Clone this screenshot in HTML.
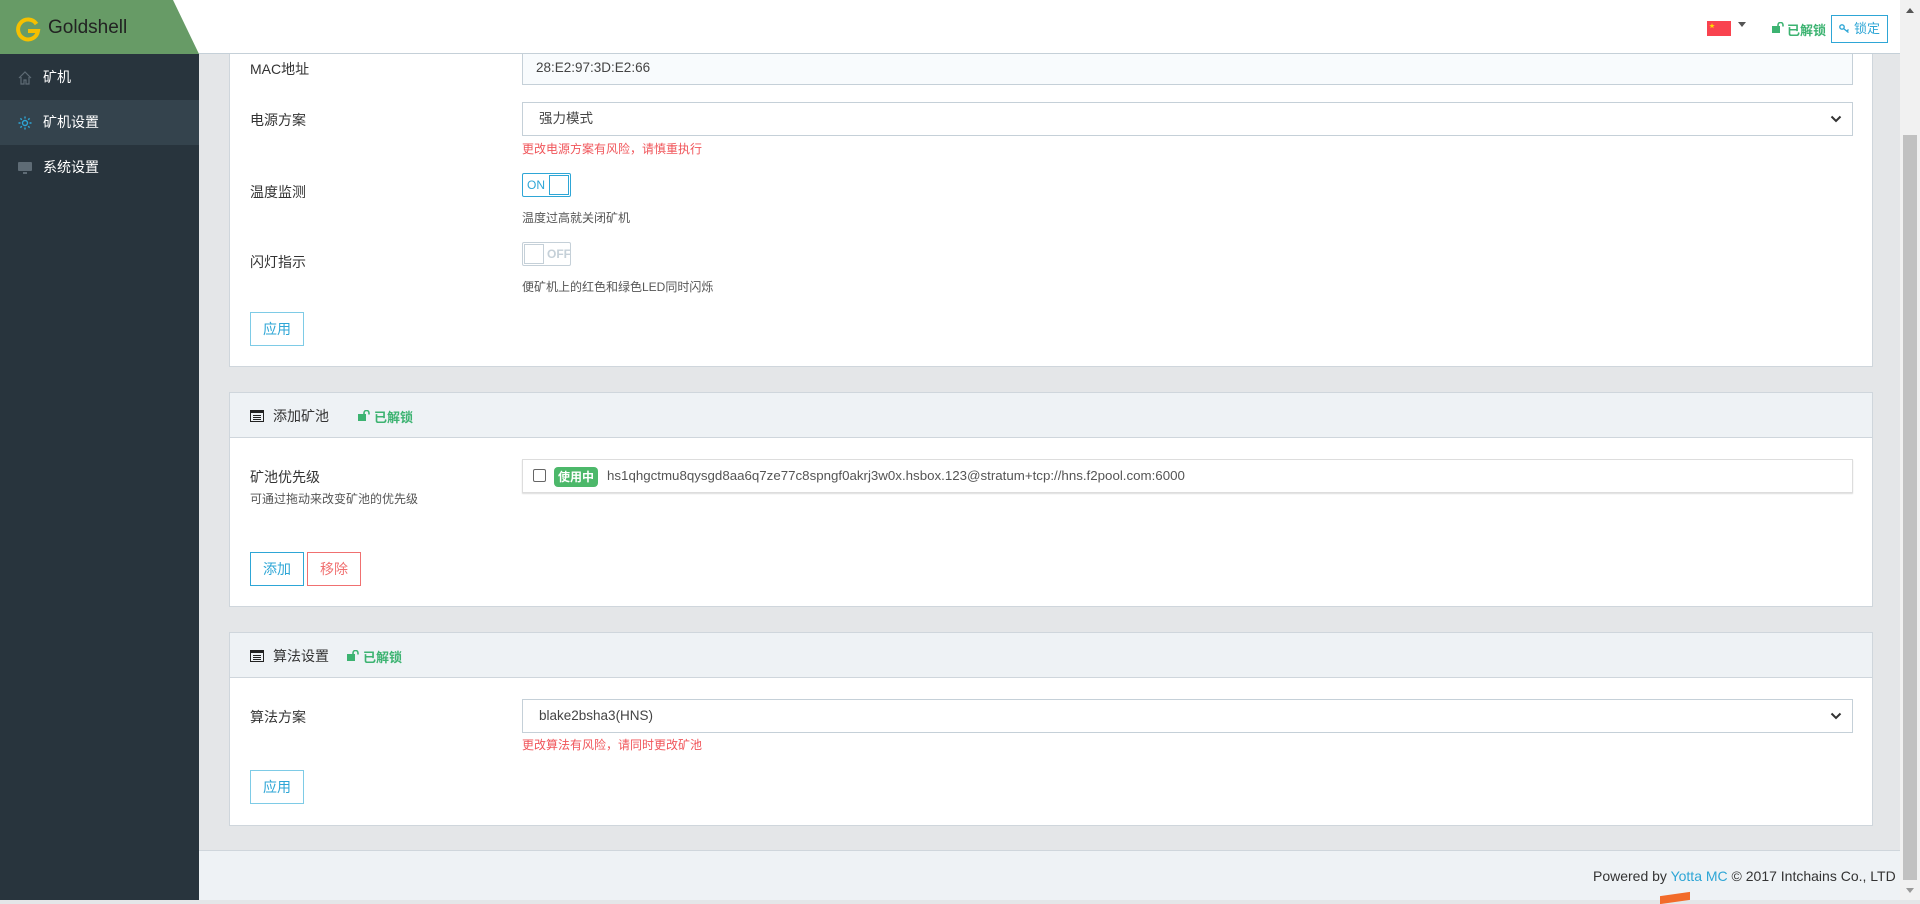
<!DOCTYPE html>
<html><head><meta charset="utf-8"><style>
*{box-sizing:border-box;margin:0;padding:0}
body{width:1920px;height:900px;overflow:hidden;background:#e4e6e8;font-family:"Liberation Sans","Noto Sans CJK SC",sans-serif;font-size:14px;color:#333;position:relative}
.abs{position:absolute}
#hdr{left:0;top:0;width:1900px;height:54px;background:#fff;border-bottom:1px solid #c5d0d8}
#logo{left:0;top:0;width:200px;height:54px;background:#679b66;clip-path:polygon(0 0,173px 0,199px 54px,0 54px)}
#side{left:0;top:54px;width:199px;height:846px;background:#28343d}
.mi{position:absolute;left:0;width:199px;height:45px;color:#fff;font-size:14px;line-height:45px;padding-left:43px}
.mi svg{position:absolute;left:17px;top:15px}
#sb{left:1900px;top:0;width:20px;height:900px;background:#f1f1f1}
.card{position:absolute;left:229px;width:1644px;background:#fff;border:1px solid #cfd6dc}
.ch{height:45px;background:#eef2f5;border-bottom:1px solid #cfd6dc;position:relative}
.lab{position:absolute;left:250px;font-size:14px;color:#333}
.inp{position:absolute;left:522px;width:1331px;height:34px;border:1px solid #c5d0d8;background:#fff;font-size:13.5px;line-height:32px;padding-left:13px;color:#444}
.red{position:absolute;left:522px;font-size:12px;color:#f0555a}
.hint{position:absolute;left:522px;font-size:12px;color:#555}
.btn{position:absolute;width:54px;height:34px;border:1px solid #2ea6d6;color:#2ea6d6;font-size:14px;line-height:32px;text-align:center;background:#fff}
.green{color:#3cb371;font-size:13px;font-weight:bold}
.chev{position:absolute;right:10px;top:12px}
</style></head><body>
<div id="side" class="abs">
 <div class="mi" style="top:1px"><svg width="16" height="16" viewBox="0 0 16 16" fill="none" stroke="#5e6b75" stroke-width="1.2"><path d="M2 8L8 2l6 6M4 7v7h3v-4h2v4h3V7"/></svg>矿机</div>
 <div class="mi" style="top:46px;background:#34434d"><svg width="16" height="16" viewBox="0 0 16 16" fill="none" stroke="#2ea6d6" stroke-width="1.4"><circle cx="8" cy="8" r="2.5"/><path d="M8 1.5v2M8 12.5v2M1.5 8h2M12.5 8h2M3.4 3.4l1.4 1.4M11.2 11.2l1.4 1.4M3.4 12.6l1.4-1.4M11.2 4.8l1.4-1.4"/></svg>矿机设置</div>
 <div class="mi" style="top:91px"><svg width="16" height="16" viewBox="0 0 16 16" fill="#5e6b75"><rect x="1" y="2" width="14" height="9" rx="1"/><rect x="6" y="12" width="4" height="2"/></svg>系统设置</div>
</div>
<!-- card1 -->
<div class="card" style="top:20px;height:347px"></div>
<div class="lab" style="top:59px">MAC地址</div>
<div class="inp" style="top:51px;background:#f8fbfd">28:E2:97:3D:E2:66</div>
<div class="lab" style="top:110px">电源方案</div>
<div class="inp" style="top:102px;padding-left:16px">强力模式<svg class="chev" width="12" height="8" viewBox="0 0 12 8"><path d="M1.5 1.5L6 6l4.5-4.5" fill="none" stroke="#333" stroke-width="2"/></svg></div>
<div class="red" style="top:140px">更改电源方案有风险，请慎重执行</div>
<div class="lab" style="top:182px">温度监测</div>
<div class="abs" style="left:522px;top:173px;width:49px;height:24px;border:1px solid #2ea6d6;border-radius:2px;font-size:12px;color:#2ea6d6;line-height:22px;padding-left:4px">ON<div class="abs" style="left:26px;top:1px;width:20px;height:20px;border:1px solid #2ea6d6"></div></div>
<div class="hint" style="top:209px">温度过高就关闭矿机</div>
<div class="lab" style="top:252px">闪灯指示</div>
<div class="abs" style="left:522px;top:242px;width:49px;height:24px;border:1px solid #c5d0d8;border-radius:2px;font-size:12px;color:#c5d0d8;line-height:22px;padding-left:24px;font-weight:bold">OFF<div class="abs" style="left:1px;top:1px;width:20px;height:20px;border:1px solid #c5d0d8"></div></div>
<div class="hint" style="top:278px">便矿机上的红色和绿色LED同时闪烁</div>
<div class="btn" style="left:250px;top:312px;border-color:#7ecbe6">应用</div>
<!-- card2 -->
<div class="card" style="top:392px;height:215px"><div class="ch">
 <svg class="abs" style="left:20px;top:17px" width="14" height="12" viewBox="0 0 14 12"><rect x="0.5" y="0.5" width="13" height="11" fill="none" stroke="#222"/><rect x="0" y="0" width="14" height="3" fill="#222"/><path d="M3 5.5h8M3 7.5h8M3 9.5h8" stroke="#222"/></svg>
 <span class="abs" style="left:43px;top:13px">添加矿池</span>
 <svg class="abs" style="left:128px;top:17px" width="12" height="11" viewBox="0 0 12 11"><rect x="0" y="4" width="8" height="7" fill="#3cb371"/><path d="M6 4.5V3a2.5 2.5 0 0 1 5 0v1.5" fill="none" stroke="#3cb371" stroke-width="1.6"/></svg><span class="abs green" style="left:144px;top:14px">已解锁</span>
</div></div>
<div class="lab" style="top:467px">矿池优先级</div>
<div class="abs" style="left:250px;top:490px;font-size:12px;color:#555">可通过拖动来改变矿池的优先级</div>
<div class="inp" style="top:459px;border-color:#ddd;box-shadow:0 1px 1px #ddd">
 <div class="abs" style="left:10px;top:9px;width:13px;height:13px;border:1px solid #666;border-radius:2px"></div>
 <span class="abs" style="left:31px;top:7px;height:20px;line-height:20px;padding:0 4px;background:#4cb86a;color:#fff;font-size:12px;font-weight:bold;border-radius:4px">使用中</span>
 <span class="abs" style="left:84px;top:0;color:#555;font-size:13.3px">hs1qhgctmu8qysgd8aa6q7ze77c8spngf0akrj3w0x.hsbox.123@stratum+tcp://hns.f2pool.com:6000</span>
</div>
<div class="btn" style="left:250px;top:552px">添加</div>
<div class="btn" style="left:307px;top:552px;border-color:#f07070;color:#f07070">移除</div>
<!-- card3 -->
<div class="card" style="top:632px;height:194px"><div class="ch">
 <svg class="abs" style="left:20px;top:17px" width="14" height="12" viewBox="0 0 14 12"><rect x="0.5" y="0.5" width="13" height="11" fill="none" stroke="#222"/><rect x="0" y="0" width="14" height="3" fill="#222"/><path d="M3 5.5h8M3 7.5h8M3 9.5h8" stroke="#222"/></svg>
 <span class="abs" style="left:43px;top:13px">算法设置</span>
 <svg class="abs" style="left:117px;top:17px" width="12" height="11" viewBox="0 0 12 11"><rect x="0" y="4" width="8" height="7" fill="#3cb371"/><path d="M6 4.5V3a2.5 2.5 0 0 1 5 0v1.5" fill="none" stroke="#3cb371" stroke-width="1.6"/></svg><span class="abs green" style="left:133px;top:14px">已解锁</span>
</div></div>
<div class="lab" style="top:707px">算法方案</div>
<div class="inp" style="top:699px;padding-left:16px">blake2bsha3(HNS)<svg class="chev" width="12" height="8" viewBox="0 0 12 8"><path d="M1.5 1.5L6 6l4.5-4.5" fill="none" stroke="#333" stroke-width="2"/></svg></div>
<div class="red" style="top:736px">更改算法有风险，请同时更改矿池</div>
<div class="btn" style="left:250px;top:770px;border-color:#7ecbe6">应用</div>
<!-- footer -->
<div class="abs" style="left:199px;top:850px;width:1701px;height:50px;background:#eef2f5;border-top:1px solid #cfd6dc"></div>
<div class="abs" style="left:1593px;top:868px;font-size:14px;color:#333">Powered by <span style="color:#2ea6d6">Yotta MC</span> © 2017 Intchains Co., LTD</div>
<div class="abs" style="left:1660px;top:894px;width:30px;height:8px;background:#f26b2a;transform:skewY(-8deg)"></div>
<!-- header -->
<div id="hdr" class="abs"></div>
<div id="logo" class="abs"></div>
<svg class="abs" style="left:15px;top:16px" width="26" height="26" viewBox="0 0 26 26"><path d="M21.5 8A10 10 0 1 0 23 15H13" fill="none" stroke="#f5c000" stroke-width="4"/></svg>
<div class="abs" style="left:48px;top:17px;font-size:19px;color:#222">Goldshell</div>
<div class="abs" style="left:1707px;top:21px;width:24px;height:15px;background:#f9434f"><span style="position:absolute;left:2px;top:0;font-size:6px;color:#fd0">★</span></div>
<div class="abs" style="left:1738px;top:22px;width:0;height:0;border-left:4px solid transparent;border-right:4px solid transparent;border-top:5px solid #555"></div>
<svg class="abs" style="left:1772px;top:22px" width="12" height="11" viewBox="0 0 12 11"><rect x="0" y="4" width="8" height="7" fill="#3cb371"/><path d="M6 4.5V3a2.5 2.5 0 0 1 5 0v1.5" fill="none" stroke="#3cb371" stroke-width="1.6"/></svg>
<div class="abs green" style="left:1787px;top:20px;font-size:13px">已解锁</div>
<div class="abs" style="left:1831px;top:15px;width:57px;height:28px;border:1px solid #2ea6d6;color:#2ea6d6;font-size:13px;line-height:26px;padding-left:22px">锁定<svg class="abs" style="left:7px;top:8px" width="12" height="10" viewBox="0 0 12 10"><circle cx="3" cy="3" r="2.2" fill="none" stroke="#2ea6d6" stroke-width="1.4"/><path d="M4.5 4.5l5 4M8 7l1.5-1.5" stroke="#2ea6d6" stroke-width="1.4"/></svg></div>
<div id="sb" class="abs"><div class="abs" style="left:3px;top:135px;width:14px;height:745px;background:#c1c1c1"></div><div class="abs" style="left:6px;top:8px;border-left:4px solid transparent;border-right:4px solid transparent;border-bottom:5px solid #555"></div><div class="abs" style="left:6px;top:888px;border-left:4px solid transparent;border-right:4px solid transparent;border-top:5px solid #999"></div></div>
</body></html>
